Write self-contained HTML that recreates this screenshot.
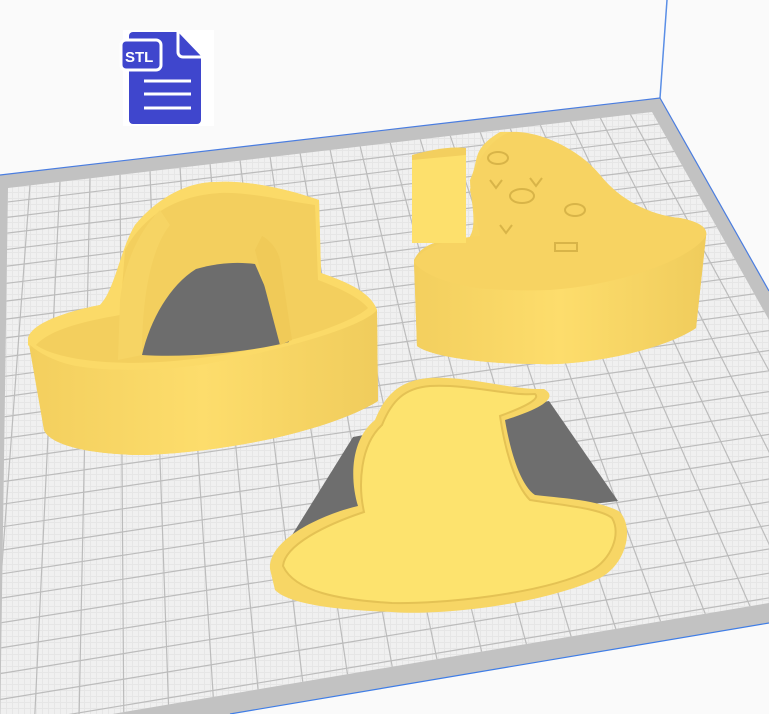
<!DOCTYPE html>
<html><head><meta charset="utf-8"><style>
html,body{margin:0;padding:0;background:#fafafa;width:769px;height:714px;overflow:hidden;}
svg{display:block}
</style></head><body>
<svg width="769" height="714" viewBox="0 0 769 714" xmlns="http://www.w3.org/2000/svg">
<defs>
<pattern id="f" width="6" height="6" patternUnits="userSpaceOnUse">
<rect width="6" height="6" fill="#f0f0f0"/>
<path d="M0 0.5H6M0.5 0V6" stroke="#e6e6e6" stroke-width="1"/>
</pattern>
<clipPath id="gc"><polygon points="8,188 652,112 769,320 769,603 0,733"/></clipPath>
<linearGradient id="wall" x1="0" x2="1"><stop offset="0" stop-color="#f3cf5e"/><stop offset="0.5" stop-color="#fddd6c"/><stop offset="1" stop-color="#f0cc5c"/></linearGradient>
</defs>
<rect width="769" height="714" fill="#fafafa"/>
<line x1="667" y1="0" x2="660" y2="98" stroke="#5a8ee6" stroke-width="1.5"/>
<polygon points="0,175 660,98 769,291 769,623 0,753" fill="#c2c2c2"/>
<line x1="0" y1="175" x2="660" y2="98" stroke="#4a7de0" stroke-width="1.2"/>
<line x1="660" y1="98" x2="769" y2="291" stroke="#4a7de0" stroke-width="1.2"/>
<polygon points="8,188 652,112 769,320 769,603 0,733" fill="url(#f)"/>
<g clip-path="url(#gc)" stroke="#bcbcbc" stroke-width="1.2">
<line x1="0" y1="202.9" x2="769" y2="110.8"/><line x1="0" y1="218.2" x2="769" y2="125.1"/><line x1="0" y1="234" x2="769" y2="139.9"/><line x1="0" y1="250.3" x2="769" y2="155"/><line x1="0" y1="267" x2="769" y2="170.5"/><line x1="0" y1="284.2" x2="769" y2="186.5"/><line x1="0" y1="301.9" x2="769" y2="203"/><line x1="0" y1="319.9" x2="769" y2="219.8"/><line x1="0" y1="338.7" x2="769" y2="237.3"/><line x1="0" y1="357.7" x2="769" y2="255"/><line x1="0" y1="377" x2="769" y2="273"/><line x1="0" y1="397.3" x2="769" y2="291.8"/><line x1="0" y1="417.4" x2="769" y2="310.6"/><line x1="0" y1="438.9" x2="769" y2="330.6"/><line x1="0" y1="460.3" x2="769" y2="350.5"/><line x1="0" y1="482.1" x2="769" y2="370.8"/><line x1="0" y1="504.5" x2="769" y2="391.6"/><line x1="0" y1="527.1" x2="769" y2="412.7"/><line x1="0" y1="550.4" x2="769" y2="434.4"/><line x1="0" y1="574.1" x2="769" y2="456.5"/><line x1="0" y1="598.3" x2="769" y2="479"/><line x1="0" y1="622.9" x2="769" y2="501.9"/><line x1="0" y1="648" x2="769" y2="525.3"/><line x1="0" y1="673.6" x2="769" y2="549"/><line x1="0" y1="699.5" x2="769" y2="573.2"/><line x1="0" y1="726" x2="769" y2="597.9"/>
<line x1="30" y1="184.5" x2="-12" y2="755"/><line x1="60" y1="180.9" x2="33.3" y2="747.4"/><line x1="90" y1="177.4" x2="78.6" y2="739.7"/><line x1="120" y1="173.8" x2="123.9" y2="732.1"/><line x1="150" y1="170.3" x2="169.2" y2="724.4"/><line x1="180" y1="166.8" x2="214.5" y2="716.7"/><line x1="210" y1="163.2" x2="259.8" y2="709.1"/><line x1="240" y1="159.7" x2="305.1" y2="701.4"/><line x1="270" y1="156.1" x2="350.4" y2="693.8"/><line x1="300" y1="152.6" x2="395.7" y2="686.1"/><line x1="330" y1="149.1" x2="441" y2="678.5"/><line x1="360" y1="145.5" x2="486.3" y2="670.8"/><line x1="390" y1="142" x2="531.6" y2="663.2"/><line x1="420" y1="138.4" x2="576.9" y2="655.5"/><line x1="450" y1="134.9" x2="622.2" y2="647.8"/><line x1="480" y1="131.4" x2="667.5" y2="640.2"/><line x1="510" y1="127.8" x2="712.8" y2="632.5"/><line x1="540" y1="124.3" x2="758.1" y2="624.9"/><line x1="570" y1="120.7" x2="803.4" y2="617.2"/><line x1="600" y1="117.2" x2="848.7" y2="609.6"/><line x1="630" y1="113.7" x2="894" y2="601.9"/>
</g>
<polygon points="230,714 769,623 769,714" fill="#fafafa"/>
<line x1="230" y1="714" x2="769" y2="623" stroke="#3f7de6" stroke-width="1.2"/>
<rect x="123" y="30" width="91" height="96" fill="#fff"/>
<path d="M137 32 H178 L201 56 V120 a4 4 0 0 1 -4 4 H133 a4 4 0 0 1 -4 -4 V36 a4 4 0 0 1 4 -4Z" fill="#3f46cd"/>
<path d="M178 32 V52 a5 5 0 0 0 5 5 H201" fill="none" stroke="#fff" stroke-width="3"/>
<rect x="121" y="40" width="40" height="30" rx="5" fill="#3f46cd" stroke="#fff" stroke-width="3"/>
<text x="125" y="62" font-family="Liberation Sans, sans-serif" font-weight="bold" font-size="15" fill="#fff">STL</text>
<path d="M144 81H191M144 94H191M144 108H191" stroke="#fff" stroke-width="3"/>
<polygon points="289,540 353,437 549,401 618,501" fill="#6e6e6e"/>
<path d="M270,569 C268,540 320,515 358,506 C350,480 350,440 375,420 C385,395 400,380 430,378 C470,376 510,390 544,389 C555,395 553,405 505,420 C510,450 520,485 535,495 C560,498 600,500 620,512 C635,530 625,565 600,578 C540,605 440,616 392,612 C340,610 290,605 275,590 Z" fill="#f7d665"/>
<path d="M283,566 C285,545 325,525 364,512 C358,485 360,445 382,425 C392,400 405,388 430,386 C470,384 508,396 535,394 C540,398 530,405 500,416 C505,450 515,485 530,500 C560,505 600,508 612,518 C622,535 610,560 592,570 C540,595 440,604 392,603 C340,600 295,592 283,566 Z" fill="#fde36e" stroke="#e4c254" stroke-width="2"/>
<path d="M28,339 C30,325 60,313 100,305 C115,290 120,250 135,225 C160,195 190,182 216,182 C250,180 290,190 319,200 L321,273 C340,280 370,290 377,310 L378,401 C340,425 250,450 147,455 C90,455 50,445 44,430 Z" fill="url(#wall)"/>
<path d="M28,339 C30,325 60,313 100,305 C115,290 120,250 135,225 C160,195 190,182 216,182 C250,180 290,190 319,200 L321,273 C340,280 370,290 377,310 C360,330 260,355 200,365 C120,375 50,370 28,345 Z" fill="#fbda68"/>
<path d="M36,345 C50,330 80,322 120,315 L125,250 C150,205 190,195 220,193 C250,192 280,200 315,205 L318,280 C340,288 360,298 368,308 C350,325 270,350 200,358 C130,368 60,362 36,345 Z" fill="#f3cf5e"/>
<path d="M142,355 C150,320 170,285 196,269 C220,262 240,262 255,264 L289,342 C250,352 190,358 142,355 Z" fill="#6d6d6d"/>
<path d="M118,360 L120,300 C125,260 140,230 160,210 L170,225 C150,250 142,300 142,355 Z" fill="#f6d464"/>
<path d="M255,250 L262,236 C270,240 278,250 280,260 L292,340 L280,345 Z" fill="#f0ca58"/>
<path d="M30,345 C60,372 130,378 200,370 C270,362 350,335 377,312 L378,401 C340,425 250,450 147,455 C90,455 50,445 44,430 Z" fill="url(#wall)"/>
<path d="M414,260 C420,248 430,240 466,238 L466,241 C480,230 470,200 470,180 C480,160 470,150 500,132 C540,130 580,150 600,175 C620,200 650,215 680,218 C700,222 708,228 706,236 L696,328 C660,352 580,366 539,364 C480,364 430,356 417,346 Z" fill="url(#wall)"/>
<path d="M414,262 C420,248 450,238 480,236 L470,190 C475,160 490,140 510,132 C540,130 580,150 600,175 C625,205 650,215 680,218 C700,222 708,228 706,236 C690,260 620,285 550,290 C480,292 420,285 414,262 Z" fill="#f7d362"/>
<rect x="412" y="155" width="54" height="88" fill="#fde06c"/>
<path d="M412,155 C430,150 450,146 466,148 L466,155 L412,160Z" fill="#f3cf5e"/>
<g fill="none" stroke="#d8b448" stroke-width="2">
<ellipse cx="498" cy="158" rx="10" ry="6"/><ellipse cx="522" cy="196" rx="12" ry="7"/><ellipse cx="575" cy="210" rx="10" ry="6"/>
<path d="M490,180 l6,8 l6,-8M530,178 l6,8 l6,-8M500,225 l6,8 l6,-8M555,243 h22 v8 h-22z"/>
</g>
<path d="M414,262 C430,285 500,295 550,292 C620,288 690,262 706,236 L696,328 C660,352 580,366 539,364 C480,364 430,356 417,346 Z" fill="url(#wall)"/>
</svg>
</body></html>
